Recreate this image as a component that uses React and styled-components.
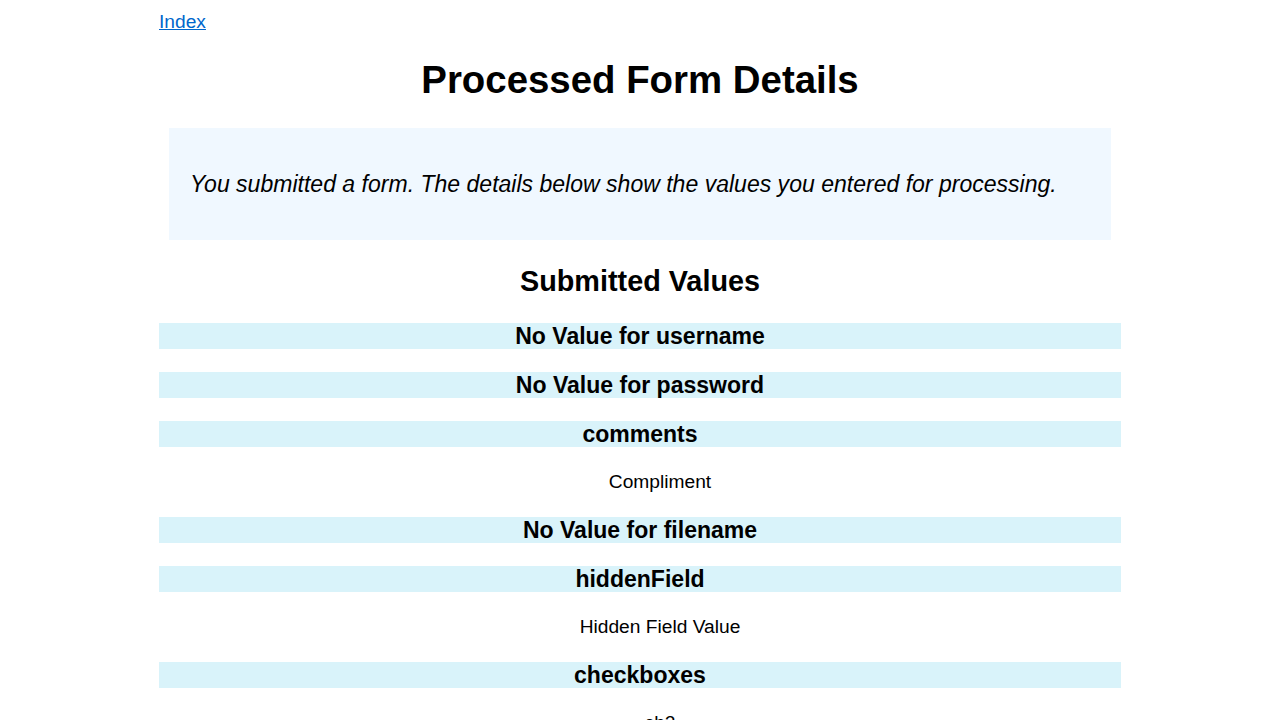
import React from 'react';
import styled, { createGlobalStyle } from 'styled-components';

const Global = createGlobalStyle`
  body {
    margin: 8px;
    background: #fff;
    color: #000;
    font-family: "Liberation Sans", Arial, sans-serif;
    font-size: 19.2px;
  }
`;

const Page = styled.div`width: 962px; margin: 0 auto;`;

const IndexLink = styled.a`
  display: inline-block;
  color: #0066cc;
  text-decoration: underline;
  font-size: 19.2px;
  line-height: 28px;
`;

const Title = styled.h1`
  font-size: 38.4px; font-weight: 700; text-align: center;
  margin: 22px 0 26px; line-height: 44px;
`;

const Intro = styled.div`
  background: aliceblue;
  margin: 0 10px;
  padding: 43px 21px;
`;

const IntroText = styled.p`
  margin: 0; font-style: italic; font-size: 23.04px; line-height: 26px;
`;

const SubTitle = styled.h2`
  font-size: 28.8px; font-weight: 700; text-align: center;
  margin: 24px 0 25px; line-height: 34px;
`;

const List = styled.dl`margin: 0;`;

const Key = styled.dt`
  background: #d9f3fa;
  font-weight: 700; font-size: 23.04px; line-height: 26px;
  text-align: center;
  margin-bottom: 23px;
`;

const Value = styled.dd`
  margin: 0 0 23px 40px;
  text-align: center; font-size: 19.2px; line-height: 24px;
`;

const fields = [
  { name: 'username' },
  { name: 'password' },
  { name: 'comments', value: 'Compliment' },
  { name: 'filename' },
  { name: 'hiddenField', value: 'Hidden Field Value' },
  { name: 'checkboxes', value: 'cb2' },
];

export default function App() {
  return (
    <Page>
      <Global />
      <IndexLink href="#">Index</IndexLink>
      <Title>Processed Form Details</Title>
      <Intro>
        <IntroText>You submitted a form. The details below show the values you entered for processing.</IntroText>
      </Intro>
      <SubTitle>Submitted Values</SubTitle>
      <List>
        {fields.map(f => (
          <React.Fragment key={f.name}>
            <Key>{f.value ? f.name : `No Value for ${f.name}`}</Key>
            {f.value && <Value>{f.value}</Value>}
          </React.Fragment>
        ))}
      </List>
    </Page>
  );
}
